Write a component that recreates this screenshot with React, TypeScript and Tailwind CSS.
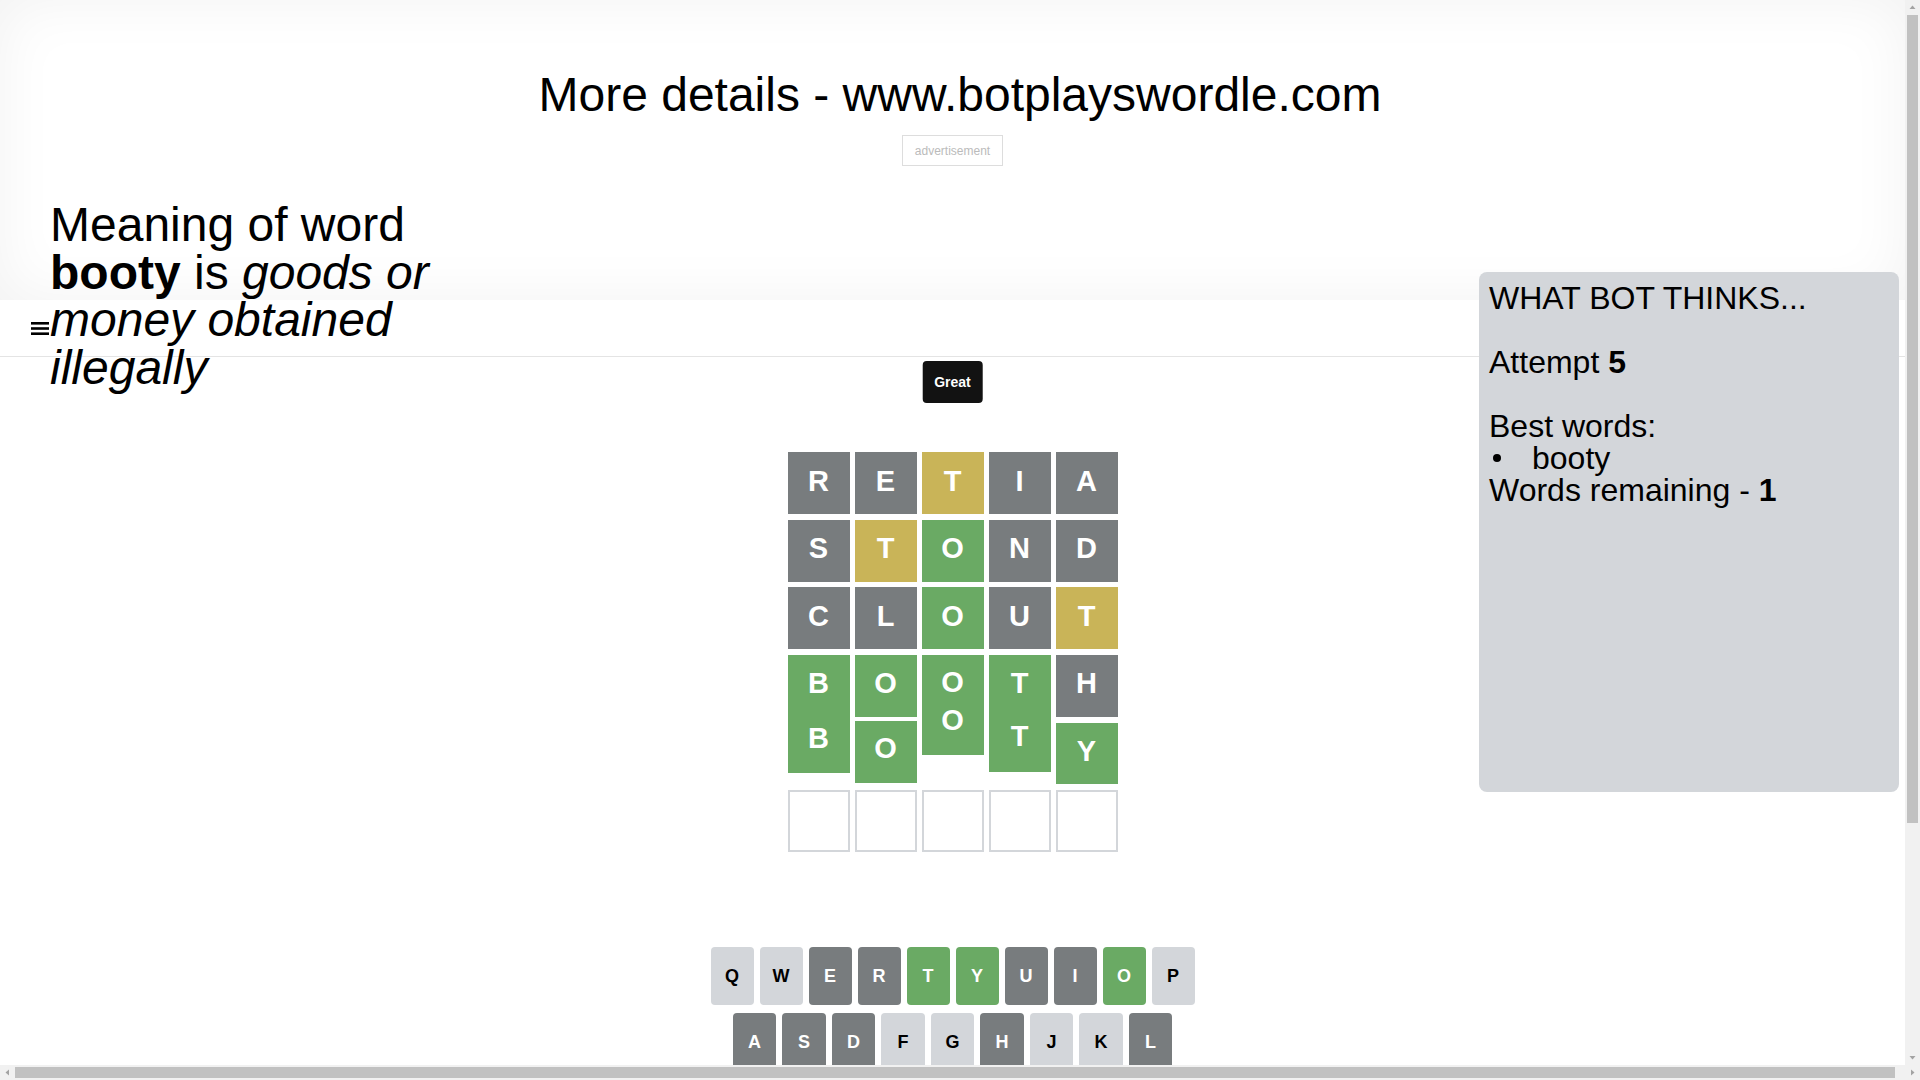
import type { ReactNode } from 'react';

type Tone = 'g' | 'y' | 'x';

const tone: Record<Tone, string> = {
  g: 'bg-[#6aaa64]',
  y: 'bg-[#c9b458]',
  x: 'bg-[#787c7e]',
};

const rows: [string, Tone][][] = [
  [['R', 'x'], ['E', 'x'], ['T', 'y'], ['I', 'x'], ['A', 'x']],
  [['S', 'x'], ['T', 'y'], ['O', 'g'], ['N', 'x'], ['D', 'x']],
  [['C', 'x'], ['L', 'x'], ['O', 'g'], ['U', 'x'], ['T', 'y']],
];

const keysTop: [string, string][] = [
  ['Q', 'l'], ['W', 'l'], ['E', 'x'], ['R', 'x'], ['T', 'g'],
  ['Y', 'g'], ['U', 'x'], ['I', 'x'], ['O', 'g'], ['P', 'l'],
];

const keysMid: [string, string][] = [
  ['A', 'x'], ['S', 'x'], ['D', 'x'], ['F', 'l'], ['G', 'l'],
  ['H', 'x'], ['J', 'l'], ['K', 'l'], ['L', 'x'],
];

const keyTone: Record<string, string> = {
  l: 'bg-[#d3d6da] text-black',
  x: 'bg-[#787c7e] text-white',
  g: 'bg-[#6aaa64] text-white',
};

function Slot({ h, children }: { h: string; children: ReactNode }) {
  return <div className={`flex w-full shrink-0 items-center justify-center ${h}`}>{children}</div>;
}

function Letter({ children }: { children: ReactNode }) {
  return <span className="mb-[4px] text-[29px] font-bold leading-none text-white">{children}</span>;
}

function Tile({ letter, t }: { letter: string; t: Tone }) {
  return (
    <div className={`flex h-[62px] items-center justify-center ${tone[t]}`}>
      <Letter>{letter}</Letter>
    </div>
  );
}

function Board() {
  return (
    <div className="mx-auto flex h-[420px] w-[350px] flex-col gap-[5px] p-[10px]">
      {rows.map((row, i) => (
        <div key={i} className="grid h-[62.5px] grid-cols-5 gap-[5px]">
          {row.map(([l, t], j) => (
            <Tile key={j} letter={l} t={t} />
          ))}
        </div>
      ))}

      {/* rows 4 and 5 caught mid reveal */}
      <div className="grid h-[130px] grid-cols-5 items-start gap-[5px]">
        <div className="flex h-[118px] flex-col overflow-hidden bg-[#6aaa64]">
          <Slot h="h-[62px]"><Letter>B</Letter></Slot>
          <Slot h="h-[48px]"><Letter>B</Letter></Slot>
        </div>
        <div className="flex flex-col gap-[4px]">
          <Tile letter="O" t="g" />
          <div className="flex h-[62px] items-center justify-center bg-[#6aaa64] pb-[3px]">
            <Letter>O</Letter>
          </div>
        </div>
        <div className="flex h-[100px] flex-col overflow-hidden bg-[#6aaa64]">
          <div className="h-[37px] w-full shrink-0 overflow-hidden">
            <Slot h="h-[59px]"><Letter>O</Letter></Slot>
          </div>
          <Slot h="h-[62px]"><Letter>O</Letter></Slot>
        </div>
        <div className="flex h-[117px] flex-col overflow-hidden bg-[#6aaa64]">
          <Slot h="h-[62px]"><Letter>T</Letter></Slot>
          <Slot h="h-[44px]"><Letter>T</Letter></Slot>
        </div>
        <div className="flex flex-col gap-[6px]">
          <Tile letter="H" t="x" />
          <div className="flex h-[61px] items-center justify-center bg-[#6aaa64]">
            <Letter>Y</Letter>
          </div>
        </div>
      </div>

      <div className="grid h-[62.5px] grid-cols-5 gap-[5px]">
        {[0, 1, 2, 3, 4].map((i) => (
          <div key={i} className="h-[62px] border-2 border-[#d3d6da]" />
        ))}
      </div>
    </div>
  );
}

function Keyboard() {
  return (
    <div className="mt-[85px] flex flex-col items-center gap-[8px]">
      <div className="flex gap-[6px]">
        {keysTop.map(([k, t]) => (
          <div key={k} className={`flex h-[58px] w-[43px] items-center justify-center rounded-[4px] text-[18px] font-bold ${keyTone[t]}`}>
            {k}
          </div>
        ))}
      </div>
      <div className="flex gap-[6px]">
        {keysMid.map(([k, t]) => (
          <div key={k} className={`flex h-[58px] w-[43.5px] items-center justify-center rounded-[4px] text-[18px] font-bold ${keyTone[t]}`}>
            {k}
          </div>
        ))}
      </div>
    </div>
  );
}

function Arrow({ points }: { points: string }) {
  return (
    <svg width="15" height="15" viewBox="0 0 15 15" className="shrink-0">
      <polygon points={points} fill="#a3a3a3" />
    </svg>
  );
}

function VerticalScrollbar() {
  return (
    <div className="flex w-[15px] shrink-0 flex-col bg-[#f1f1f1]">
      <Arrow points="4.5,9 10.5,9 7.5,5.5" />
      <div className="flex-1 px-[2px]">
        <div className="h-[808px] bg-[#c1c1c1]" />
      </div>
      <Arrow points="4.5,6 10.5,6 7.5,9.5" />
    </div>
  );
}

function HorizontalScrollbar() {
  return (
    <div className="flex h-[15px] shrink-0 bg-[#f1f1f1]">
      <Arrow points="9,4.5 9,10.5 5.5,7.5" />
      <div className="flex-1 py-[2px]">
        <div className="h-full w-[1880px] bg-[#c1c1c1]" />
      </div>
      <Arrow points="6,4.5 6,10.5 9.5,7.5" />
    </div>
  );
}

export default function App() {
  return (
    <div className="flex h-screen w-screen flex-col overflow-hidden bg-white font-['Liberation_Sans',Arial,sans-serif] text-black">
      <div className="flex min-h-0 flex-1">
        <main className="relative min-w-0 flex-1 overflow-hidden">
          <section className="flex h-[300px] flex-col items-center shadow-[inset_0_0_60px_rgba(0,0,0,0.055)]">
            <h1 className="mt-[71px] w-[1920px] self-start text-center text-[48px] font-normal leading-[48px]">
              More details - www.botplayswordle.com
            </h1>
            <div className="mt-[16px] flex h-[31px] items-center border border-[#dddddd] px-[12px] text-[12px] text-[#bbbbbb]">
              advertisement
            </div>
          </section>

          <header className="flex h-[57px] items-center border-b border-[#e4e4e4] pl-[31px]">
            <svg width="18" height="13" viewBox="0 0 18 13">
              <rect x="0" y="0" width="18" height="2.6" fill="#000" />
              <rect x="0" y="5.2" width="18" height="2.6" fill="#000" />
              <rect x="0" y="10.4" width="18" height="2.6" fill="#000" />
            </svg>
          </header>

          <div className="pt-[85px]">
            <Board />
            <Keyboard />
          </div>

          <div className="absolute left-1/2 top-[361px] flex h-[42px] -translate-x-1/2 items-center rounded-[4px] bg-[#121212] px-[12px] text-[14px] font-bold text-white">
            Great
          </div>

          <div className="absolute left-[50px] top-[201px] w-[430px] text-[48px] leading-[47.5px]">
            Meaning of word <b>booty</b> is <i>goods or money obtained illegally</i>
          </div>

          <aside className="absolute left-[1479px] top-[272px] h-[520px] w-[420px] rounded-lg bg-[#d3d6da] pl-[10px] pt-[10px] text-[32px] leading-[32px]">
            <div>WHAT BOT THINKS...</div>
            <div className="mt-[32px]">
              Attempt <b>5</b>
            </div>
            <div className="mt-[32px]">Best words:</div>
            <ul className="list-none">
              <li className="flex items-center">
                <span className="ml-[4px] mr-[31px] h-[8px] w-[8px] rounded-full bg-black" />
                booty
              </li>
            </ul>
            <div>
              Words remaining - <b>1</b>
            </div>
          </aside>
        </main>
        <VerticalScrollbar />
      </div>
      <HorizontalScrollbar />
    </div>
  );
}
